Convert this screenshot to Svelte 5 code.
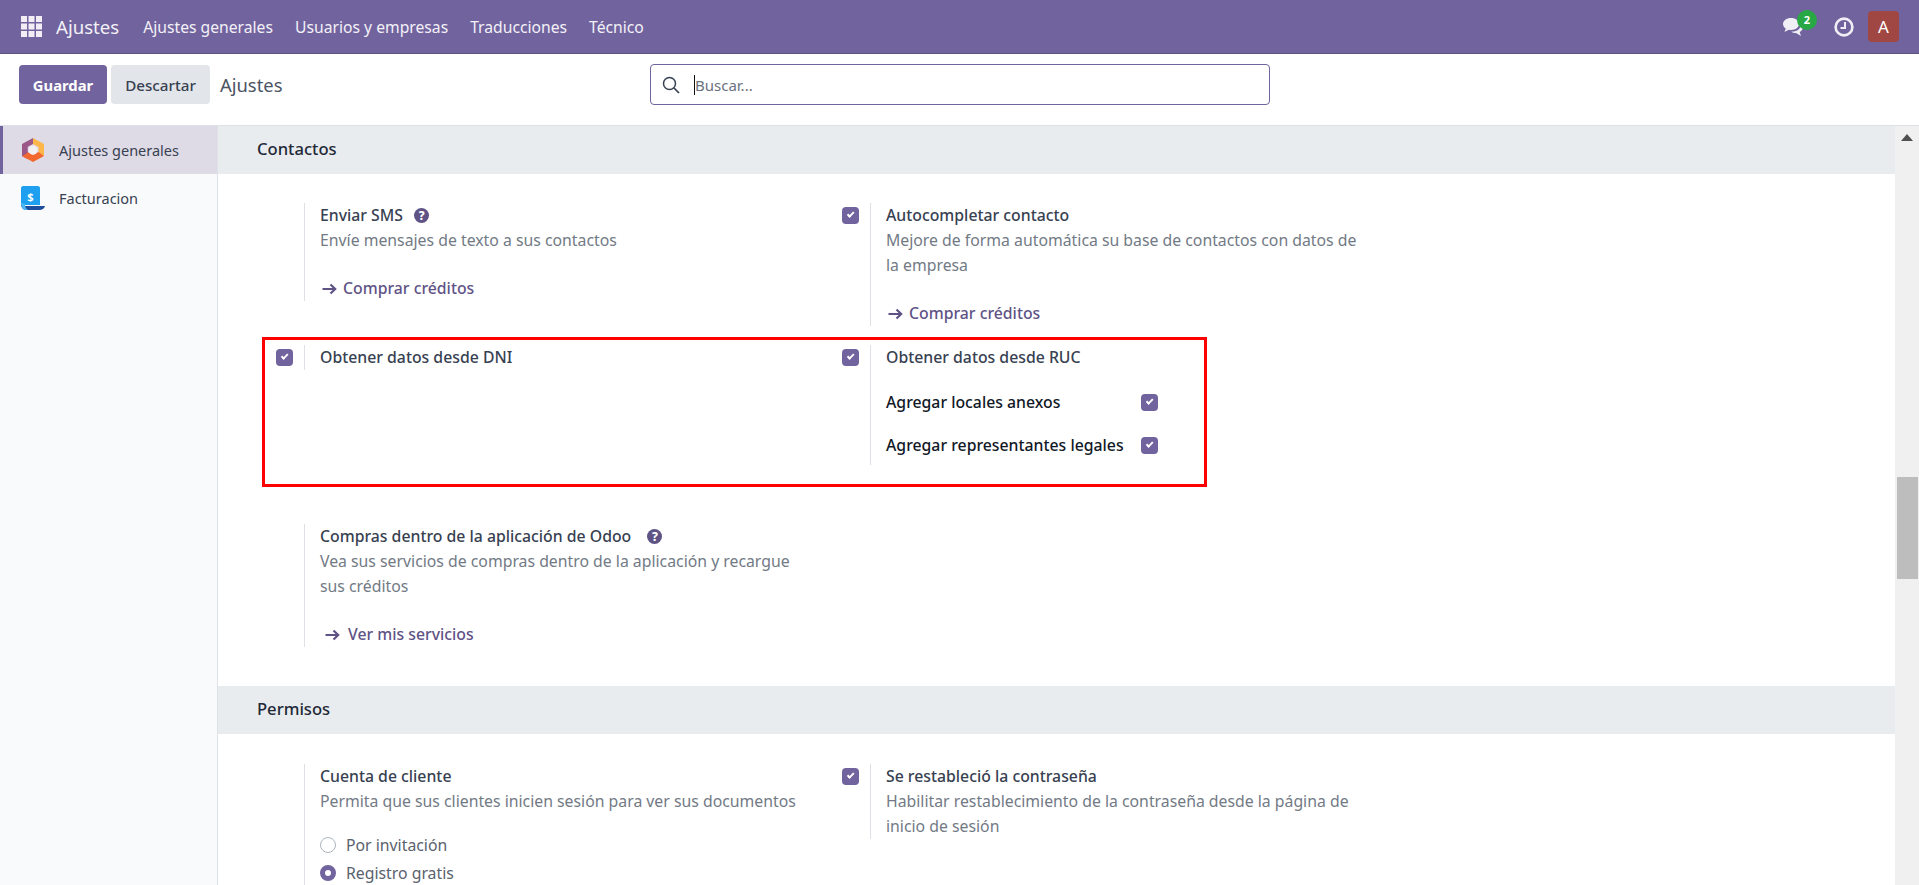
<script>
  const nav = ['Ajustes generales', 'Usuarios y empresas', 'Traducciones', 'Técnico'];
</script>

{#snippet arrow()}
  <svg class="arrow" viewBox="0 0 15 12" width="15" height="12" aria-hidden="true">
    <path d="M0.500 6H13M8.500 1.500L13.200 6l-4.700 4.500" fill="none" stroke="currentColor" stroke-width="2.200" />
  </svg>
{/snippet}

<div class="page">
  <header class="navbar">
    <svg class="apps" viewBox="0 0 21 21" width="21" height="21" aria-hidden="true">
      {#each [0, 7.5, 15] as y}
        {#each [0, 7.5, 15] as x}
          <rect {x} {y} width="6" height="6" fill="#f3eef6" />
        {/each}
      {/each}
    </svg>
    <span class="brand">Ajustes</span>
    <nav class="menu">
      {#each nav as item}<span>{item}</span>{/each}
    </nav>
    <div class="systray">
      <span class="chat">
        <svg viewBox="0 0 22 20" width="22" height="20" aria-hidden="true">
          <path d="M9 1C4.400 1 1 3.700 1 7c0 1.900 1.100 3.500 2.800 4.600L2.500 15l4.300-2.300c.7.1 1.500.2 2.200.2 4.600 0 8-2.600 8-5.900S13.600 1 9 1z" fill="#f1eff6" />
          <path d="M18.500 8.200c.1 3.600-3.400 6.200-8 6.400l-1.200.1c1.200 1 3 1.500 4.700 1.400l5 2.900-1.300-3.900c1.700-.9 3-2.400 3-4.100 0-1.100-.8-2.200-2.200-2.800z" fill="#f1eff6" />
        </svg>
        <b class="badge">2</b>
      </span>
      <svg class="clock" viewBox="0 0 20 20" width="20" height="20" aria-hidden="true">
        <circle cx="10" cy="10" r="8.400" fill="none" stroke="#f1eff6" stroke-width="2.600" />
        <path d="M11 5v6H6.500" fill="none" stroke="#f1eff6" stroke-width="2" />
      </svg>
      <span class="avatar">A</span>
    </div>
  </header>

  <div class="control">
    <div class="actions">
      <button class="primary">Guardar</button>
      <button class="secondary">Descartar</button>
      <span class="crumb">Ajustes</span>
    </div>
    <div class="search">
      <svg viewBox="0 0 18 18" width="18" height="18" aria-hidden="true">
        <circle cx="7.500" cy="7.500" r="6" fill="none" stroke="#374151" stroke-width="1.500" />
        <path d="M12 12l5 5" stroke="#374151" stroke-width="1.700" />
      </svg>
      <span class="caret"></span>
      <span class="placeholder">Buscar...</span>
    </div>
  </div>

  <div class="body">
    <aside class="side">
      <div class="tab active">
        <svg viewBox="0 0 22 24" width="22" height="24" aria-hidden="true">
          <path d="M11 0L0 6v12l5.500 3V9l5.500-3z" fill="#9c5789" />
          <path d="M11 0l11 6v12l-5.500-3V9L11 6z" fill="#fdb64a" />
          <path d="M0 18l11 6 11-6-5.500-4-5.500 3-5.500-3z" fill="#f2682f" />
          <path d="M5.500 9L0 6v12l5.500-3z" fill="#9c5789" />
          <circle cx="11" cy="12" r="4.500" fill="#f3f0f4" />
        </svg>
        <span>Ajustes generales</span>
      </div>
      <div class="tab">
        <svg viewBox="0 0 24 24" width="24" height="24" aria-hidden="true">
          <path d="M2 0h15c1 0 2 1 2 2v17H0V2c0-1 1-2 2-2z" fill="#1e9ff0" />
          <path d="M0 18c0 3 2 6 5 6h14c3 0 5-3 5-4H6c-2 0-2 0-6-2z" fill="#1f4f9c" />
          <path d="M0 17c0 4 2 7 5 7h2c-2-1-3-3-3-6z" fill="#4cb9f7" />
          <text x="9.500" y="14.500" class="dollar" text-anchor="middle">$</text>
        </svg>
        <span>Facturacion</span>
      </div>
    </aside>

    <main class="content">
      <h3 class="section">Contactos</h3>
      <div class="settings first">
        <section class="row r1">
          <div class="box">
            <div class="pane"></div>
            <div class="text">
              <div class="title">Enviar SMS <i class="help">?</i></div>
              <div class="desc">Envíe mensajes de texto a sus contactos</div>
              <div class="link">{@render arrow()}Comprar créditos</div>
            </div>
          </div>
          <div class="box">
            <div class="pane"><span class="check"></span></div>
            <div class="text">
              <div class="title">Autocompletar contacto</div>
              <div class="desc">Mejore de forma automática su base de contactos con datos de<br />la empresa</div>
              <div class="link">{@render arrow()}Comprar créditos</div>
            </div>
          </div>
        </section>

        <section class="row r2">
          <div class="box">
            <div class="pane"><span class="check"></span></div>
            <div class="text"><div class="title">Obtener datos desde DNI</div></div>
          </div>
          <div class="box">
            <div class="pane"><span class="check"></span></div>
            <div class="text sub">
              <div class="title">Obtener datos desde RUC</div>
              <div class="option first-option">
                <span class="label">Agregar locales anexos</span><span class="check"></span>
              </div>
              <div class="option">
                <span class="label">Agregar representantes legales</span><span class="check"></span>
              </div>
            </div>
          </div>
          <div class="highlight"></div>
        </section>

        <section class="row r3">
          <div class="box">
            <div class="pane"></div>
            <div class="text">
              <div class="title">Compras dentro de la aplicación de Odoo <i class="help far">?</i></div>
              <div class="desc">Vea sus servicios de compras dentro de la aplicación y recargue<br />sus créditos</div>
              <div class="link wide">{@render arrow()}Ver mis servicios</div>
            </div>
          </div>
        </section>
      </div>

      <h3 class="section">Permisos</h3>
      <div class="settings second">
        <section class="row">
          <div class="box">
            <div class="pane"></div>
            <div class="text">
              <div class="title">Cuenta de cliente</div>
              <div class="desc">Permita que sus clientes inicien sesión para ver sus documentos</div>
              <div class="radio r-first"><span class="dot"></span>Por invitación</div>
              <div class="radio"><span class="dot on"></span>Registro gratis</div>
            </div>
          </div>
          <div class="box">
            <div class="pane"><span class="check"></span></div>
            <div class="text">
              <div class="title">Se restableció la contraseña</div>
              <div class="desc">Habilitar restablecimiento de la contraseña desde la página de<br />inicio de sesión</div>
            </div>
          </div>
        </section>
      </div>
    </main>

    <div class="scrollbar">
      <span class="up"></span>
      <span class="thumb"></span>
    </div>
  </div>
</div>

<style>
  :global(body) {
    margin: 0;
    overflow: hidden;
  }
  .page {
    width: 1919px;
    height: 885px;
    display: flex;
    flex-direction: column;
    overflow: hidden;
    background: #fff;
    font-family: "Noto Sans", "Open Sans", sans-serif;
    font-size: 15.800px;
    color: #374151;
  }
  .navbar {
    height: 54px;
    flex: none;
    box-sizing: border-box;
    display: flex;
    align-items: center;
    background: #71639e;
    border-bottom: 1px solid #5f5386;
    color: #f3f1f7;
    padding-left: 21px;
  }
  .brand {
    margin-left: 14px;
    font-size: 18.600px;
  }
  .menu {
    display: flex;
    gap: 22px;
    margin-left: 24px;
    font-size: 15.700px;
  }
  .systray {
    margin-left: auto;
    margin-right: 20px;
    display: flex;
    align-items: center;
  }
  .chat {
    position: relative;
    display: flex;
    margin-right: 30px;
  }
  .badge {
    position: absolute;
    left: 15px;
    top: -7px;
    width: 20px;
    height: 20px;
    border-radius: 50%;
    background: #28a745;
    color: #fff;
    font-size: 11px;
    line-height: 20px;
    text-align: center;
  }
  .avatar {
    width: 31px;
    height: 31px;
    margin-left: 14px;
    border-radius: 4px;
    background: #a04744;
    color: #fff;
    font-size: 17px;
    line-height: 31px;
    text-align: center;
  }
  .control {
    height: 72px;
    flex: none;
    box-sizing: border-box;
    display: grid;
    grid-template-columns: 631px 620px;
    align-items: start;
    padding: 11px 0 0 19px;
    border-bottom: 1px solid #dee2e6;
  }
  .actions {
    display: flex;
    align-items: center;
    gap: 4px;
  }
  button {
    height: 39px;
    border: 0;
    border-radius: 4px;
    font: inherit;
    padding: 0;
  }
  .primary {
    width: 88px;
    background: #71639e;
    color: #fff;
    font-size: 14.800px;
    font-weight: 700;
  }
  .secondary {
    width: 99px;
    background: #e2e5e9;
    color: #374151;
    font-size: 15.200px;
    font-weight: 500;
  }
  .crumb {
    margin-left: 6px;
    font-size: 18.400px;
    color: #4b5563;
  }
  .search {
    height: 41px;
    box-sizing: border-box;
    display: flex;
    align-items: center;
    border: 1px solid #71639e;
    border-radius: 4px;
    padding-left: 11px;
    margin-top: -1px;
  }
  .caret {
    width: 1px;
    height: 20px;
    margin-left: 14px;
    background: #111;
  }
  .placeholder {
    color: #6b7280;
    font-size: 15px;
  }
  .body {
    flex: 1;
    min-height: 0;
    display: flex;
  }
  .side {
    width: 218px;
    flex: none;
    box-sizing: border-box;
    background: #f9fafb;
    border-right: 1px solid #dee2e6;
    font-size: 14.500px;
  }
  .tab {
    height: 48px;
    display: flex;
    align-items: center;
    gap: 14px;
    padding-left: 21px;
    box-sizing: border-box;
  }
  .tab.active {
    background: #dedae6;
    border-left: 3px solid #71639e;
    padding-left: 19px;
    gap: 15px;
  }
  .dollar {
    fill: #fff;
    font-size: 11px;
    font-weight: 700;
    font-family: "Noto Sans", sans-serif;
  }
  .content {
    flex: 1;
    min-width: 0;
    overflow: hidden;
  }
  .section {
    margin: 0;
    height: 48px;
    box-sizing: border-box;
    padding-left: 39px;
    background: #e9ecef;
    font-size: 16.600px;
    font-weight: 500;
    line-height: 46px;
    color: #1f2937;
  }
  .settings {
    padding: 29px 0 0 34px;
  }
  .settings.first {
    padding-bottom: 39px;
  }
  .settings.second {
    padding-top: 30px;
  }
  .row {
    position: relative;
    display: grid;
    grid-template-columns: 566px 566px;
    width: 1132px;
    align-items: start;
  }
  .r1 {
    margin-bottom: 19px;
  }
  .r2 {
    margin-bottom: 59px;
  }
  .box {
    display: flex;
    align-items: stretch;
  }
  .pane {
    width: 28px;
    margin-left: 24px;
    flex: none;
    padding-top: 4px;
    box-sizing: border-box;
  }
  .text {
    flex: 1;
    border-left: 1px solid #dde1e5;
    padding-left: 15px;
    line-height: 25px;
    white-space: nowrap;
  }
  .title {
    font-weight: 500;
    color: #374151;
  }
  .desc {
    color: #727a85;
  }
  .link {
    display: flex;
    align-items: center;
    margin-top: 23px;
    color: #5f5386;
    font-weight: 500;
  }
  .arrow {
    flex: none;
    margin: 0 6px 0 2px;
  }
  .link.wide .arrow {
    margin: 0 8px 0 5px;
  }
  .help {
    display: inline-block;
    width: 15px;
    height: 15px;
    margin-left: 7px;
    border-radius: 50%;
    background: #5f5386;
    color: #fff;
    font-size: 12px;
    font-style: normal;
    font-weight: 800;
    line-height: 15px;
    text-align: center;
    vertical-align: 1px;
  }
  .help.far {
    margin-left: 12px;
  }
  .check {
    position: relative;
    display: block;
    width: 17px;
    height: 17px;
    box-sizing: border-box;
    border-radius: 4px;
    background: #71639e;
  }
  .check::after {
    content: "";
    position: absolute;
    left: 5px;
    top: 4.500px;
    width: 7px;
    height: 3.500px;
    border-left: 2px solid #fff;
    border-bottom: 2px solid #fff;
    box-sizing: border-box;
    transform: rotate(-45deg);
  }
  .option {
    display: flex;
    align-items: center;
    height: 25px;
    margin-top: 18px;
  }
  .first-option {
    margin-top: 20px;
  }
  .option:last-child {
    margin-bottom: 7px;
  }
  .label {
    width: 255px;
    color: #111827;
    font-weight: 500;
  }
  .highlight {
    position: absolute;
    left: 10px;
    top: -8px;
    width: 945px;
    height: 150px;
    box-sizing: border-box;
    border: 3px solid #f00;
    pointer-events: none;
  }
  .radio {
    display: flex;
    align-items: center;
    gap: 10px;
    height: 28px;
    color: #5a626e;
  }
  .r-first {
    margin-top: 17px;
  }
  .dot {
    width: 16px;
    height: 16px;
    box-sizing: border-box;
    border: 1px solid #adb5bd;
    border-radius: 50%;
    background: #fff;
  }
  .dot.on {
    border: 5px solid #71639e;
  }
  .scrollbar {
    position: relative;
    width: 24px;
    flex: none;
    background: #f0f0f0;
    display: flex;
    justify-content: center;
  }
  .up {
    position: absolute;
    top: 8px;
    left: 6px;
    border-left: 6px solid transparent;
    border-right: 6px solid transparent;
    border-bottom: 7px solid #505050;
  }
  .thumb {
    position: absolute;
    top: 351px;
    left: 2px;
    width: 21px;
    height: 102px;
    background: #bdbdbd;
  }
</style>
